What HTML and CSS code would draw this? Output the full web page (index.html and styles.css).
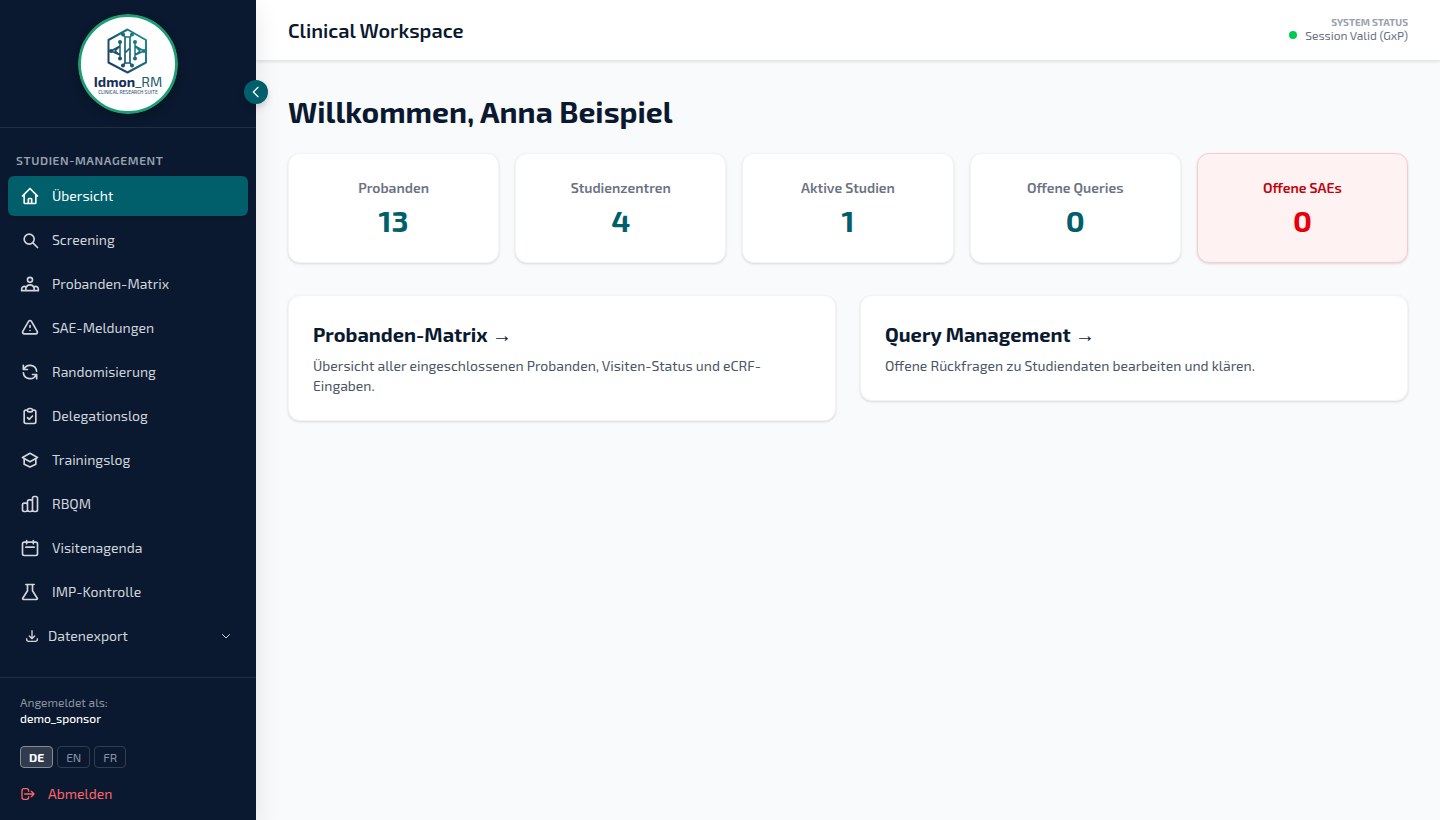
FILE: index.html
```html
<!DOCTYPE html>
<html lang="de">
<head>
<meta charset="utf-8">
<meta name="viewport" content="width=device-width, initial-scale=1">
<title>Clinical Workspace</title>
<link rel="stylesheet" href="styles.css">
</head>
<body>
<div class="app">
  <aside class="sidebar">
    <div class="brand">
      <svg class="logo" viewBox="0 0 100 100" role="img" aria-label="Idmon_RM Clinical Research Suite">
        <defs>
          <linearGradient id="mark" gradientUnits="userSpaceOnUse" x1="30" y1="50" x2="68" y2="25">
            <stop offset="0" stop-color="#1b3a66"/>
            <stop offset="0.5" stop-color="#1a6377"/>
            <stop offset="1" stop-color="#1c8a8e"/>
          </linearGradient>
        </defs>
        <circle cx="50" cy="50" r="48.5" fill="#fff" stroke="#1f9d73" stroke-width="3"/>
        <g fill="none" stroke="url(#mark)" stroke-width="2" stroke-linejoin="round" stroke-linecap="round">
          <path d="M49.500 15.500L68 26V48.500L49.500 58.500L30.500 48.500V26Z"/>
          <path d="M45 20.500L47 23V49L45 51.500M54 20.500L52 23V49L54 51.500M47 23H52M47 49H52M47 39L52 34" stroke-width="1.700"/>
          <path d="M42 28V32L33 37L42 41V44M57 28V32L66 37L57 41V44M42 32V41L37 37ZM57 32V41L62 37Z" stroke-width="1.500"/>
        </g>
        <g fill="url(#mark)">
          <circle cx="45" cy="20.500" r="2"/><circle cx="54" cy="20.500" r="2"/>
          <circle cx="45" cy="51.500" r="2"/><circle cx="54" cy="51.500" r="2"/>
          <circle cx="42" cy="28" r="2"/><circle cx="57" cy="28" r="2"/>
          <circle cx="42" cy="44.500" r="2"/><circle cx="57" cy="44.500" r="2"/>
          <circle cx="33" cy="37" r="2"/><circle cx="66" cy="37" r="2"/>
        </g>
        <text class="logo-name" x="50" y="73" text-anchor="middle"><tspan class="logo-bold">Idmon</tspan><tspan class="logo-accent">_RM</tspan></text>
        <text class="logo-tag" x="50" y="80" text-anchor="middle">CLINICAL RESEARCH SUITE</text>
      </svg>
    </div>
    <button class="collapse" type="button" aria-label="Seitenleiste einklappen">
      <svg class="icon-sm" viewBox="0 0 24 24"><path d="M15 19l-7-7 7-7"/></svg>
    </button>

    <nav class="nav">
      <h2 class="nav-title">STUDIEN-MANAGEMENT</h2>
      <a class="nav-item active" href="#" aria-current="page"><svg class="icon" viewBox="0 0 24 24"><path d="M3 12l2-2m0 0l7-7 7 7M5 10v10a1 1 0 001 1h3m10-11l2 2m-2-2v10a1 1 0 01-1 1h-3m-6 0a1 1 0 001-1v-4a1 1 0 011-1h2a1 1 0 011 1v4a1 1 0 001 1m-6 0h6"/></svg>Übersicht</a>
      <a class="nav-item" href="#"><svg class="icon" viewBox="0 0 24 24"><path d="M21 21l-5.200-5.200M17 11a6 6 0 11-12 0 6 6 0 0112 0z"/></svg>Screening</a>
      <a class="nav-item" href="#"><svg class="icon" viewBox="0 0 24 24"><path d="M17 20h5v-2a3 3 0 00-5.356-1.857M17 20H7m10 0v-2c0-.656-.126-1.283-.356-1.857M7 20H2v-2a3 3 0 015.356-1.857M7 20v-2c0-.656.126-1.283.356-1.857m0 0a5.002 5.002 0 019.288 0M15 7a3 3 0 11-6 0 3 3 0 016 0z"/></svg>Probanden-Matrix</a>
      <a class="nav-item" href="#"><svg class="icon" viewBox="0 0 24 24"><path d="M12 9v2m0 4h.01m-6.938 4h13.856c1.540 0 2.502-1.667 1.732-3L13.732 4c-.77-1.333-2.694-1.333-3.464 0L3.340 16c-.77 1.333.192 3 1.732 3z"/></svg>SAE-Meldungen</a>
      <a class="nav-item" href="#"><svg class="icon" viewBox="0 0 24 24"><path d="M4 4v5h.582m15.356 2A8.001 8.001 0 004.582 9m0 0H9m11 11v-5h-.581m0 0a8.003 8.003 0 01-15.357-2m15.357 2H15"/></svg>Randomisierung</a>
      <a class="nav-item" href="#"><svg class="icon" viewBox="0 0 24 24"><path d="M9 5H7a2 2 0 00-2 2v12a2 2 0 002 2h10a2 2 0 002-2V7a2 2 0 00-2-2h-2M9 5a2 2 0 002 2h2a2 2 0 002-2M9 5a2 2 0 012-2h2a2 2 0 012 2m-6 9l2 2 4-4"/></svg>Delegationslog</a>
      <a class="nav-item" href="#"><svg class="icon" viewBox="0 0 24 24"><path d="M12 14l9-5-9-5-9 5 9 5zM5 11v6l7 3.500 7-3.500v-6"/></svg>Trainingslog</a>
      <a class="nav-item" href="#"><svg class="icon" viewBox="0 0 24 24"><path d="M9 19v-6a2 2 0 00-2-2H5a2 2 0 00-2 2v6a2 2 0 002 2h2a2 2 0 002-2zm0 0V9a2 2 0 012-2h2a2 2 0 012 2v10m-6 0a2 2 0 002 2h2a2 2 0 002-2m0 0V5a2 2 0 012-2h2a2 2 0 012 2v14a2 2 0 01-2 2h-2a2 2 0 01-2-2z"/></svg>RBQM</a>
      <a class="nav-item" href="#"><svg class="icon" viewBox="0 0 24 24"><path d="M8 7V3m8 4V3m-9 8h10M5 21h14a2 2 0 002-2V7a2 2 0 00-2-2H5a2 2 0 00-2 2v12a2 2 0 002 2z"/></svg>Visitenagenda</a>
      <a class="nav-item" href="#"><svg class="icon" viewBox="0 0 24 24"><path d="M7 3h10M9 3v7.500L3.300 19.500A1 1 0 004.200 21h15.600a1 1 0 00.9-1.500L15 10.500V3"/></svg>IMP-Kontrolle</a>
      <button class="nav-item nav-group" type="button" aria-expanded="false"><svg class="icon-sm" viewBox="0 0 24 24"><path d="M4 16v1a3 3 0 003 3h10a3 3 0 003-3v-1m-4-4l-4 4m0 0l-4-4m4 4V4"/></svg><span class="grow">Datenexport</span><svg class="icon-xs" viewBox="0 0 24 24"><path d="M19 9l-7 7-7-7"/></svg></button>
    </nav>

    <div class="account">
      <div class="account-label">Angemeldet als:</div>
      <div class="account-name">demo_sponsor</div>
      <div class="langs">
        <button class="lang lang-on" type="button" aria-pressed="true">DE</button>
        <button class="lang" type="button" aria-pressed="false">EN</button>
        <button class="lang" type="button" aria-pressed="false">FR</button>
      </div>
      <a class="logout" href="#"><svg class="icon-sm" viewBox="0 0 24 24"><path d="M17 16l4-4m0 0l-4-4m4 4H7m6 4v1a3 3 0 01-3 3H6a3 3 0 01-3-3V7a3 3 0 013-3h4a3 3 0 013 3v1"/></svg>Abmelden</a>
    </div>
  </aside>

  <div class="content">
    <header class="topbar">
      <div class="topbar-title">Clinical Workspace</div>
      <div class="status">
        <div class="status-label">SYSTEM STATUS</div>
        <div class="status-value"><span class="dot"></span>Session Valid (GxP)</div>
      </div>
    </header>
    <main class="main">
      <h1 class="welcome">Willkommen, Anna Beispiel</h1>
      <section class="stats">
        <div class="card stat"><div class="stat-label">Probanden</div><div class="stat-value">13</div></div>
        <div class="card stat"><div class="stat-label">Studienzentren</div><div class="stat-value">4</div></div>
        <div class="card stat"><div class="stat-label">Aktive Studien</div><div class="stat-value">1</div></div>
        <div class="card stat"><div class="stat-label">Offene Queries</div><div class="stat-value">0</div></div>
        <div class="card stat alert"><div class="stat-label">Offene SAEs</div><div class="stat-value">0</div></div>
      </section>
      <section class="links">
        <a class="card" href="#"><h2 class="link-title">Probanden-Matrix <span class="arrow">→</span></h2><p class="link-text">Übersicht aller eingeschlossenen Probanden, Visiten-Status und eCRF-Eingaben.</p></a>
        <a class="card" href="#"><h2 class="link-title">Query Management <span class="arrow">→</span></h2><p class="link-text">Offene Rückfragen zu Studiendaten bearbeiten und klären.</p></a>
      </section>
    </main>
  </div>
</div>
</body>
</html>
```
FILE: styles.css
```css
* { box-sizing: border-box; }
body, h1, h2, p { margin: 0; }
body {
  font-family: "Exo 2", Inter, "Noto Sans", sans-serif;
  font-size: 14px;
  line-height: 20px;
  color: #0a192f;
  background: #f9fafc;
}
a { color: inherit; text-decoration: none; }
button { font: inherit; color: inherit; background: none; border: 0; padding: 0; cursor: pointer; }
svg { flex: none; }

.app { display: flex; min-height: 100vh; }

.sidebar {
  position: relative;
  display: flex;
  flex-direction: column;
  flex: none;
  width: 256px;
  background: #0a192f;
  color: #d1d5dc;
  box-shadow: 0 10px 24px rgba(0, 0, 0, 0.1);
  z-index: 1;
}
.brand {
  display: flex;
  justify-content: center;
  padding: 14px 0 13px;
  border-bottom: 1px solid #212e42;
}
.logo { width: 100px; height: 100px; border-radius: 50%; box-shadow: 0 4px 8px rgba(0, 0, 0, 0.2); }
.logo-name { font-size: 14px; fill: #17305a; }
.logo-bold { font-weight: 700; }
.logo-accent { fill: #1c5873; }
.logo-tag { font-size: 5px; font-weight: 500; fill: #3a5272; }

.collapse {
  position: absolute;
  top: 80px;
  right: -12px;
  display: flex;
  align-items: center;
  justify-content: center;
  width: 24px;
  height: 24px;
  border-radius: 50%;
  background: #005f6b;
  color: #fff;
  box-shadow: 0 4px 6px rgba(0, 0, 0, 0.15);
}

.icon, .icon-sm, .icon-xs {
  fill: none;
  stroke: currentColor;
  stroke-width: 2;
  stroke-linecap: round;
  stroke-linejoin: round;
}
.icon { width: 20px; height: 20px; }
.icon-sm { width: 16px; height: 16px; }
.icon-xs { width: 12px; height: 12px; }

.nav { display: flex; flex-direction: column; flex: 1; gap: 4px; padding: 24px 8px 16px; }
.nav-title {
  padding: 0 8px 4px;
  font-size: 12px;
  line-height: 16px;
  font-weight: 600;
  letter-spacing: 0.05em;
  color: #99a1af;
}
.nav-item {
  display: flex;
  align-items: center;
  gap: 12px;
  height: 40px;
  padding: 0 12px;
  border-radius: 6px;
}
.active { background: #005f6b; color: #fff; box-shadow: 0 1px 3px rgba(0, 0, 0, 0.2); }
.nav-group { gap: 8px; padding: 0 16px; text-align: left; }
.grow { flex: 1; }

.account { padding: 16px 20px; border-top: 1px solid #212e42; font-size: 12px; line-height: 16px; }
.account-label { color: #8b93a1; }
.account-name { font-weight: 500; color: #fff; }
.langs { display: flex; gap: 4px; margin: 20px 0 16px; }
.lang {
  height: 22px;
  padding: 0 8px;
  border: 1px solid #323e50;
  border-radius: 4px;
  font-size: 12px;
  line-height: 20px;
  color: #8b93a1;
}
.lang-on { background: #313b4e; border-color: #858c97; color: #fff; font-weight: 700; }
.logout { display: flex; align-items: center; gap: 12px; font-size: 14px; line-height: 20px; color: #ff6467; }

.content { flex: 1; min-width: 0; }
.topbar {
  display: flex;
  align-items: center;
  justify-content: space-between;
  height: 61px;
  padding: 0 32px;
  background: #fff;
  border-bottom: 1px solid #e5e7eb;
  box-shadow: 0 1px 3px rgba(0, 0, 0, 0.1);
}
.topbar-title { font-size: 20px; line-height: 28px; font-weight: 600; }
.status { text-align: right; }
.status-label { font-size: 10px; line-height: 10px; font-weight: 700; color: #99a1af; }
.status-value { display: flex; align-items: center; gap: 8px; font-size: 12px; line-height: 16px; color: #6a7282; }
.dot { width: 8px; height: 8px; border-radius: 50%; background: #00c950; }

.main { padding: 32px; }
.welcome { margin-bottom: 24px; font-size: 30px; line-height: 36px; font-weight: 700; }
.stats { display: grid; grid-template-columns: repeat(5, 1fr); gap: 16px; margin-bottom: 32px; }
.links { display: grid; grid-template-columns: repeat(2, 1fr); align-items: start; gap: 24px; }
.card {
  padding: 24px;
  background: #fff;
  border: 1px solid #f3f4f6;
  border-radius: 12px;
  box-shadow: 0 1px 3px rgba(0, 0, 0, 0.1), 0 1px 2px rgba(0, 0, 0, 0.04);
}
.stat { text-align: center; }
.stat-label { margin-bottom: 4px; font-weight: 600; color: #6a7282; }
.stat-value { font-size: 30px; line-height: 36px; font-weight: 700; color: #005f6b; }
.alert { background: #fef2f2; border-color: #ffc9c9; }
.alert .stat-label { color: #c10007; }
.alert .stat-value { color: #e7000b; }
.link-title { margin-bottom: 8px; font-size: 20px; line-height: 28px; font-weight: 700; }
.arrow { font-family: "Liberation Sans", sans-serif; font-weight: 400; line-height: 1; }
.link-text { color: #4a5565; }
```
